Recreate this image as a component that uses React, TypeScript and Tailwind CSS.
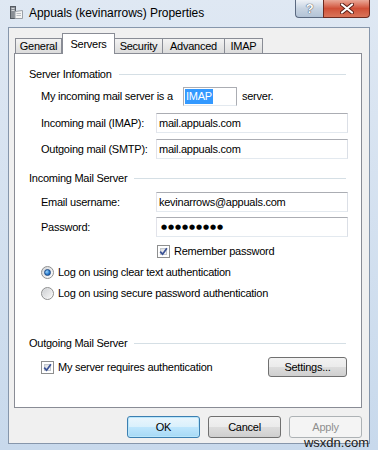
const sans = "font-['Liberation_Sans',Arial,sans-serif]";

function CheckBox() {
  return (
    <span className="relative flex h-[13px] w-[13px] shrink-0 items-center justify-center border border-[#8e8f8f] bg-white">
      <span className="absolute inset-[2px] border border-[#c3c7cc] bg-gradient-to-br from-[#d9dce0] to-[#fbfbfb]" />
      <svg className="relative" width="9" height="9" viewBox="0 0 9 9">
        <path d="M1.2 4.6 L3.6 7.2 L7.9 1.2" stroke="#3b5296" strokeWidth="1.7" fill="none" />
      </svg>
    </span>
  );
}

function Radio({ on }: { on?: boolean }) {
  return (
    <span className="relative flex h-[13px] w-[13px] shrink-0 items-center justify-center rounded-full border border-[#8e8f8f] bg-gradient-to-br from-[#d4d6d9] to-[#ffffff]">
      {on ? (
        <span className="h-[7px] w-[7px] rounded-full border border-[#1d4a86] bg-[radial-gradient(circle_at_35%_35%,#9fd4fb,#2b7fd0_55%,#124a8f)]" />
      ) : (
        <span className="h-[9px] w-[9px] rounded-full bg-gradient-to-br from-[#cfd1d4] to-[#f6f6f6]" />
      )}
    </span>
  );
}

function Header({ label, className }: { label: string; className: string }) {
  return (
    <div className={"flex h-[14px] items-center pl-[14px] pr-[15px] " + className}>
      <span>{label}</span>
      <span className="ml-[7px] h-px flex-1 bg-[#d5dfe5]" />
    </div>
  );
}

function Field({ label, value, className }: { label: string; value: string; className: string }) {
  return (
    <div className={"flex h-[20px] items-center pl-[26px] " + className}>
      <span className="w-[115px]">{label}</span>
      <span className="flex h-[20px] w-[192px] items-center border border-[#abadb3] border-l-[#e2e3ea] border-r-[#dbdfe6] border-b-[#e3e9ef] pl-[2px]">
        {value}
      </span>
    </div>
  );
}

export default function App() {
  const tabs = ["General", "Servers", "Security", "Advanced", "IMAP"];
  const widths = ["w-[47px]", "w-[53px]", "w-[48px]", "w-[62px]", "w-[38px]"];

  return (
    <div className={"relative h-[450px] w-[378px] overflow-hidden bg-gradient-to-b from-[#dfe8f3] to-[#c8d9ec] text-[11px] tracking-[-0.25px] text-black " + sans}>
      {/* title bar */}
      <div className="flex h-[27px]">
        <svg className="ml-[10px] mt-[6px]" width="13" height="13" viewBox="0 0 13 13">
          <rect x="0.5" y="0.5" width="5" height="12" fill="#8a8f96" stroke="#555b63" />
          <rect x="1.5" y="2" width="3" height="1" fill="#d6d9dd" />
          <rect x="1.5" y="4" width="3" height="1" fill="#d6d9dd" />
          <path d="M5 5.5 L12.5 4.5 L12.5 12.5 L5 12.5 Z" fill="#f4f4f4" stroke="#9aa0a8" />
          <path d="M6.5 7.5 H11 M6.5 9.5 H11" stroke="#b8bcc2" />
        </svg>
        <div className="ml-[6px] mt-[6px] text-[12px] leading-[14px] tracking-[-0.05px]">
          Appuals (kevinarrows) Properties
        </div>
        <div className="ml-auto mr-[8px] flex h-[18px]">
          <div className="flex w-[28px] items-center justify-center rounded-bl-[4px] border border-t-0 border-r-0 border-[#5a6980] bg-gradient-to-b from-[#eef2f7] via-[#c7d3e1] to-[#b3c3d6] text-[13px] font-bold leading-none text-white [text-shadow:0_0_1px_#3b4656,0_0_1px_#3b4656]">
            ?
          </div>
          <div className="flex w-[47px] items-center justify-center rounded-br-[4px] border border-t-0 border-[#6e2a20] bg-gradient-to-b from-[#e9a898] via-[#cf4f37] to-[#d9745a]">
            <svg width="14" height="11" viewBox="0 0 14 11">
              <path d="M2 1.5 L12 9.5 M12 1.5 L2 9.5" stroke="#5a1e16" strokeWidth="4" strokeLinecap="round" />
              <path d="M2 1.5 L12 9.5 M12 1.5 L2 9.5" stroke="#ffffff" strokeWidth="2.2" strokeLinecap="round" />
            </svg>
          </div>
        </div>
      </div>

      {/* dialog body */}
      <div className="ml-[8px] flex h-[417px] w-[362px] flex-col border border-[#8696ab] bg-[#f0f0f0]">
        <div className="relative z-10 mt-[5px] flex h-[20px] items-end pl-[6px]">
          {tabs.map((t, i) =>
            t === "Servers" ? (
              <div
                key={t}
                className={"-mb-px flex h-[21px] items-start justify-center border border-b-0 border-[#898c95] bg-white pt-[2px] " + widths[i]}
              >
                {t}
              </div>
            ) : (
              <div
                key={t}
                className={"flex h-[15px] items-center justify-center border border-b-0 border-l-0 border-[#898c95] bg-gradient-to-b from-[#f3f3f3] to-[#dcdcdc] first:border-l " + widths[i]}
              >
                {t}
              </div>
            )
          )}
        </div>

        <div className="ml-[5px] h-[355px] w-[348px] border border-[#898c95] bg-white">
          <Header label="Server Infomation" className="mt-[13px]" />
          <div className="mt-[6px] flex h-[19px] items-center pl-[26px]">
            <span className="w-[142px]">My incoming mail server is a</span>
            <span className="flex h-[19px] w-[54px] items-center border border-[#abadb3] border-b-[#e3e9ef] pl-px">
              <span className="bg-[#3399ff] px-px leading-[15px] text-white">IMAP</span>
            </span>
            <span className="ml-[5px]">server.</span>
          </div>
          <Field label="Incoming mail (IMAP):" value="mail.appuals.com" className="mt-[7px]" />
          <Field label="Outgoing mail (SMTP):" value="mail.appuals.com" className="mt-[6px]" />

          <Header label="Incoming Mail Server" className="mt-[12px]" />
          <Field label="Email username:" value="kevinarrows@appuals.com" className="mt-[7px]" />
          <div className="mt-[5px] flex h-[20px] items-center pl-[26px]">
            <span className="w-[115px]">Password:</span>
            <span className="flex h-[20px] w-[192px] items-center border border-[#abadb3] border-l-[#e2e3ea] border-r-[#dbdfe6] border-b-[#e3e9ef] pl-[4px] font-['DejaVu_Sans',sans-serif] text-[7px] tracking-[0.9px]">
              ●●●●●●●●●
            </span>
          </div>
          <div className="mt-[7px] flex h-[14px] items-center pl-[142px]">
            <CheckBox />
            <span className="ml-[4px]">Remember password</span>
          </div>
          <div className="mt-[7px] flex h-[14px] items-center pl-[26px]">
            <Radio on />
            <span className="ml-[4px]">Log on using clear text authentication</span>
          </div>
          <div className="mt-[7px] flex h-[14px] items-center pl-[26px]">
            <Radio />
            <span className="ml-[4px]">Log on using secure password authentication</span>
          </div>

          <Header label="Outgoing Mail Server" className="mt-[36px]" />
          <div className="mt-[7px] flex h-[20px] items-center pl-[26px] pr-[14px]">
            <CheckBox />
            <span className="ml-[4px]">My server requires authentication</span>
            <button className="ml-auto flex h-[20px] w-[79px] items-center justify-center rounded-[3px] border border-[#707070] bg-[linear-gradient(#f2f2f2_0%,#ebebeb_50%,#dddddd_50%,#cfcfcf_100%)]">
              Settings...
            </button>
          </div>
        </div>

        <div className="mt-[8px] flex justify-end gap-[8px] pr-[7px]">
          <button className="flex h-[22px] w-[73px] items-center justify-center rounded-[3px] border border-[#3c7fb1] bg-[linear-gradient(#eaf6fd_0%,#d9f0fc_50%,#bee6fd_50%,#a7d9f5_100%)] shadow-[inset_0_0_0_1px_#b9e6fb]">
            OK
          </button>
          <button className="flex h-[22px] w-[73px] items-center justify-center rounded-[3px] border border-[#707070] bg-[linear-gradient(#f2f2f2_0%,#ebebeb_50%,#dddddd_50%,#cfcfcf_100%)]">
            Cancel
          </button>
          <button className="flex h-[22px] w-[73px] items-center justify-center rounded-[3px] border border-[#adb2b5] bg-[#f4f4f4] text-[#8f8f8f]">
            Apply
          </button>
        </div>
      </div>

      <span className="absolute right-[9px] top-[435px] text-[13px] leading-[15px] tracking-normal text-[#1a1a1a]">
        wsxdn.com
      </span>
    </div>
  );
}
